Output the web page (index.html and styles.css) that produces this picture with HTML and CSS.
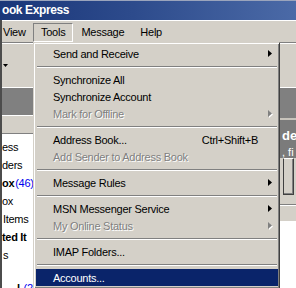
FILE: index.html
```html
<!DOCTYPE html>
<html lang="en">
<head>
  <meta charset="UTF-8">
  <title>Outlook Express - Tools menu</title>
  <link rel="stylesheet" href="styles.css">
</head>
<body>
  <div class="win">
    <div class="title">ook Express</div>
    <div class="frame">
      <div class="menubar">
        <span class="mi first">View</span>
        <span class="mi open">Tools</span>
        <span class="mi">Message</span>
        <span class="mi">Help</span>
      </div>
      <div class="toolbar"><span class="drop"></span></div>
      <div class="panes">
        <div class="left">
          <div class="band"></div>
          <div class="fhead"></div>
          <ul class="tree">
            <li>ess</li>
            <li>ders</li>
            <li><b>ox</b><span class="n">(46)</span></li>
            <li>ox</li>
            <li class="in">Items</li>
            <li><b>ted It</b></li>
            <li class="in">s</li>
            <li></li>
            <li class="deep"><b>l</b> <span class="n">(2)</span></li>
          </ul>
        </div>
        <div class="right">
          <div class="band2"></div>
          <div class="rhead">
            <div class="big">de</div>
            <div class="small">, fi</div>
          </div>
          <div class="rbar"><span class="rbtn"></span></div>
          <div class="rbar2"></div>
          <div class="rbody"></div>
        </div>
      </div>
    </div>

    <div class="menu">
      <div class="item">Send and Receive<span class="sub"></span></div>
      <div class="sep"></div>
      <div class="item">Synchronize All</div>
      <div class="item">Synchronize Account</div>
      <div class="item off">Mark for Offline<span class="sub"></span></div>
      <div class="sep"></div>
      <div class="item">Address Book...<span class="key">Ctrl+Shift+B</span></div>
      <div class="item off">Add Sender to Address Book</div>
      <div class="sep"></div>
      <div class="item">Message Rules<span class="sub"></span></div>
      <div class="sep"></div>
      <div class="item">MSN Messenger Service<span class="sub"></span></div>
      <div class="item off">My Online Status<span class="sub"></span></div>
      <div class="sep"></div>
      <div class="item">IMAP Folders...</div>
      <div class="sep"></div>
      <div class="item hot">Accounts...</div>
    </div>
  </div>
</body>
</html>
```

FILE: styles.css
```css
body {
  margin: 0;
  font-family: "Liberation Sans", Arial, sans-serif;
  font-size: 11px;
  background: #d4d0c8;
  color: #000;
}
.win {
  position: relative;
  width: 296px;
  height: 288px;
  overflow: hidden;
  background: #d4d0c8;
}
.title {
  height: 19px;
  border-top: 1px solid #9aa4bc;
  padding-left: 2px;
  background: linear-gradient(90deg, #1a3679 0%, #2d4b8c 45%, #4b6aa7 100%);
  color: #fff;
  font-weight: bold;
  font-size: 12px;
  letter-spacing: -0.4px;
  line-height: 19px;
  white-space: nowrap;
}
.frame {
  border-left: 2px solid #4c4c4c;
}
.menubar {
  display: flex;
  height: 19px;
  padding: 2px 0 0 1px;
  border-top: 1px solid #fff;
  letter-spacing: -0.25px;
}
.mi {
  padding: 0 7px;
  border: 1px solid transparent;
  line-height: 17px;
  white-space: nowrap;
}
.mi.first {
  padding: 0;
  width: 29px;
  margin-left: -1px;
}
.mi.open {
  border-color: #808080 #fff #fff #808080;
}
.toolbar {
  height: 23px;
  padding: 21px 0 0 1px;
  border-top: 1px solid #808080;
  border-bottom: 1px solid #fff;
  box-shadow: inset 0 1px #fff;
}
.drop {
  display: block;
  width: 5px;
  height: 3px;
  background: #000;
  clip-path: polygon(0 0, 100% 0, 50% 100%);
}
.panes {
  display: flex;
  height: 200px;
}
.left {
  width: 148px;
  background: #fff;
}
.band {
  height: 27px;
  background: #808080;
}
.fhead {
  height: 17px;
  background: #d4d0c8;
  border-top: 1px solid #fff;
  border-bottom: 1px solid #808080;
}
.tree {
  list-style: none;
  margin: 0;
  padding: 4px 0 0;
  white-space: nowrap;
  letter-spacing: -0.3px;
}
.tree li {
  height: 18px;
  line-height: 18px;
}
.tree li.in {
  padding-left: 1px;
}
.tree li.deep {
  padding-left: 15px;
  line-height: 12px;
}
.n {
  color: #0000ee;
  margin-left: 1px;
}
.right {
  flex: 1;
  background: #fff;
  overflow: hidden;
}
.band2 {
  height: 30px;
  background: #808080;
}
.rhead {
  height: 38px;
  border-top: 2px solid #c8c4bc;
  background: #7b7b7b;
  color: #fff;
  padding-left: 132px;
  white-space: nowrap;
}
.rhead .big {
  font-size: 13px;
  font-weight: bold;
  padding-top: 8px;
  line-height: 15px;
}
.rhead .small {
  line-height: 15px;
  padding-top: 2px;
}
.rbar {
  height: 46px;
  background: #d4d0c8;
}
.rbtn {
  display: block;
  margin-left: 133px;
  width: 9px;
  height: 35px;
  border: 1px solid;
  border-color: #fff #404040 #404040 #404040;
  box-shadow: inset -1px -1px #808080;
}
.rbar2 {
  height: 16px;
  background: #d4d0c8;
  border-top: 1px solid #808080;
  box-shadow: inset 0 1px #fff;
}
.rbody {
  height: 60px;
  background: #fff;
}
.menu {
  position: absolute;
  left: 33px;
  top: 42px;
  width: 242px;
  padding: 2px 1px 2px 2px;
  border: 1px solid;
  border-color: #d4d0c8 #404040 #404040 #d4d0c8;
  box-shadow: inset 1px 1px #fff, inset -1px -1px #808080;
  background: #d4d0c8;
  letter-spacing: -0.25px;
}
.item {
  display: flex;
  align-items: center;
  height: 17px;
  padding: 0 6px 0 17px;
  white-space: nowrap;
}
.item.off {
  color: #808080;
  text-shadow: 1px 1px 0 #fff;
}
.item.hot {
  background: #0a246a;
  color: #fff;
}
.key {
  margin-left: auto;
  margin-right: 14px;
}
.sub {
  margin-left: auto;
  width: 4px;
  height: 7px;
}
.sub::before {
  content: "";
  display: block;
  width: 4px;
  height: 7px;
  background: #000;
  clip-path: polygon(0 0, 100% 50%, 0 100%);
}
.off .sub {
  filter: drop-shadow(1px 1px 0 #fff);
}
.off .sub::before {
  background: #808080;
}
.sep {
  height: 5px;
  padding: 4px 1px 0;
}
.sep::before {
  content: "";
  display: block;
  border-top: 1px solid #808080;
  border-bottom: 1px solid #fff;
}
```
